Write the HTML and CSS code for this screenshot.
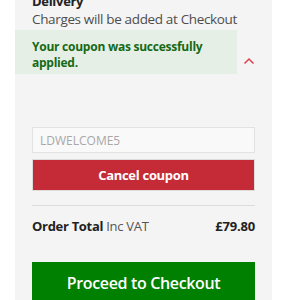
FILE: index.html
```html
<!DOCTYPE html>
<html>
<head>
<meta charset="utf-8">
<link rel="stylesheet" href="styles.css">
</head>
<body>
<div class="panel">
  <div class="delivery">
    <div class="delivery-title">Delivery</div>
    <div class="delivery-text">Charges will be added at Checkout</div>
  </div>
  <div class="notice-row">
    <div class="notice">Your coupon was successfully applied.</div>
    <svg class="chevron" width="12" height="8" viewBox="0 0 12 8"><path d="M1.5 6.5 L6 2 L10.5 6.5" fill="none" stroke="#e0404f" stroke-width="1.5"/></svg>
  </div>
  <div class="coupon">
    <input class="coupon-input" type="text" placeholder="LDWELCOME5">
    <button class="cancel-btn">Cancel coupon</button>
  </div>
  <div class="total">
    <div class="total-label"><b>Order Total</b> Inc VAT</div>
    <div class="total-value">£79.80</div>
  </div>
  <button class="checkout-btn">Proceed to Checkout</button>
</div>
</body>
</html>
```
FILE: styles.css
```css
html, body {
  margin: 0;
  padding: 0;
  background: #fff;
  overflow: hidden;
  font-family: "Open Sans", "Liberation Sans", sans-serif;
}
.panel {
  margin: -8px 0 0 15px;
  width: 257px;
  min-height: 320px;
  background: #f4f4f4;
}
.delivery {
  padding-left: 17px;
}
.delivery-title {
  font-weight: 700;
  font-size: 13px;
  letter-spacing: -0.3px;
  line-height: 18px;
  color: #222;
}
.delivery-text {
  font-size: 13.5px;
  letter-spacing: -0.35px;
  line-height: 18px;
  color: #4d4d4d;
}
.notice-row {
  display: flex;
  align-items: flex-start;
  margin-top: 2px;
}
.notice {
  width: 189px;
  height: 44px;
  box-sizing: border-box;
  width: 222px;
  padding: 9px 16px 3px 17px;
  background: #e5efe5;
  color: #166916;
  font-weight: 700;
  font-size: 12px;
  letter-spacing: -0.25px;
  line-height: 16px;
}
.chevron {
  margin: 27px 0 0 6px;
}
.coupon {
  padding: 0 17px;
  margin-top: 53px;
}
.coupon-input {
  display: block;
  width: 100%;
  box-sizing: border-box;
  height: 26px;
  border: 1px solid #e2e2e2;
  background: #f9f9f9;
  font-family: inherit;
  font-size: 12px;
  padding: 0 7px;
  outline: none;
}
.coupon-input::placeholder {
  color: #a8a8a8;
}
.cancel-btn {
  display: block;
  width: 100%;
  margin-top: 6px;
  height: 32px;
  border: 1px solid #dcdcdc;
  background: #c42b37;
  color: #fff;
  font-family: inherit;
  font-weight: 700;
  font-size: 13px;
  letter-spacing: -0.3px;
  padding: 0;
}
.total {
  margin: 14px 17px 0;
  border-top: 1px solid #dcdcdc;
  display: flex;
  justify-content: space-between;
  align-items: center;
  height: 40px;
  font-size: 13px;
  letter-spacing: -0.3px;
}
.total-label {
  color: #555;
}
.total-label b {
  color: #222;
}
.total-value {
  font-weight: 700;
  color: #222;
  letter-spacing: -0.2px;
}
.checkout-btn {
  display: block;
  margin: 16px 17px 0;
  width: 223px;
  height: 42px;
  border: none;
  background: #008000;
  color: #fff;
  font-family: inherit;
  font-weight: 600;
  font-size: 16px;
  letter-spacing: -0.35px;
  padding: 0;
}
```
